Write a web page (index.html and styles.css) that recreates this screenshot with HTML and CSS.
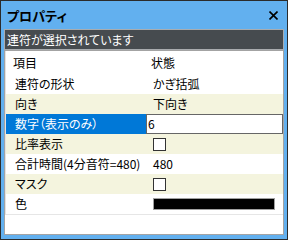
FILE: index.html
```html
<!DOCTYPE html>
<html lang="ja">
<head>
    <meta charset="UTF-8">
    <title>プロパティ</title>
    <link rel="stylesheet" href="styles.css">
</head>
<body>
    <div class="window">
        <div class="titlebar">
            <span class="title">プロパティ</span>
            <svg class="close" width="9" height="9" viewBox="0 0 9 9">
                <path d="M0.5 0.5L8.5 8.5M8.5 0.5L0.5 8.5" stroke="#000" stroke-width="1.6"/>
            </svg>
        </div>
        <div class="status">連符が選択されています</div>
        <div class="grid">
            <div class="rows">
                <div class="row head">
                    <div class="label">項目</div>
                    <div class="value">状態</div>
                </div>
                <div class="row">
                    <div class="label">連符の形状</div>
                    <div class="value">かぎ括弧</div>
                </div>
                <div class="row alt">
                    <div class="label">向き</div>
                    <div class="value">下向き</div>
                </div>
                <div class="row selected">
                    <div class="label">数字（表示のみ）</div>
                    <div class="value edit">6</div>
                </div>
                <div class="row alt">
                    <div class="label">比率表示</div>
                    <div class="value"><span class="check"></span></div>
                </div>
                <div class="row">
                    <div class="label">合計時間(4分音符=480)</div>
                    <div class="value">480</div>
                </div>
                <div class="row alt">
                    <div class="label">マスク</div>
                    <div class="value"><span class="check"></span></div>
                </div>
                <div class="row last">
                    <div class="label">色</div>
                    <div class="value"><span class="swatch"></span></div>
                </div>
            </div>
        </div>
    </div>
</body>
</html>
```

FILE: styles.css
```css
body {
    margin: 0;
    font-family: "Noto Sans CJK JP", "Noto Sans", sans-serif;
    font-size: 12px;
    font-feature-settings: "palt";
    color: #000;
}

.window {
    width: 288px;
    height: 240px;
    box-sizing: border-box;
    border: 1px solid #2b2b2b;
    background-color: #62b0ef;
    padding: 0 3px 4px 3px;
    display: flex;
    flex-direction: column;
}

.titlebar {
    height: 27px;
    display: flex;
    align-items: center;
    justify-content: space-between;
    padding: 1px 6px 0 3px;
}

.title {
    font-size: 13px;
    font-weight: bold;
}

.status {
    height: 19px;
    line-height: 19px;
    border: 1px solid #a9acaf;
    background-color: #464b4f;
    color: #fff;
    padding-left: 2px;
}

.grid {
    flex: 1;
    background-color: #fff;
    border: 1px solid #a3a3a3;
}

.rows {
    border-left: 1px solid #e2e2e2;
}

.row {
    display: grid;
    grid-template-columns: 140px 1fr;
    height: 20px;
    line-height: 20px;
}

.row.head {
    height: 23px;
    line-height: 23px;
}

.row.alt {
    background-color: #f4f4de;
}

.row.last {
    border-bottom: 1px solid #e6e6e6;
}

.label {
    padding-left: 9px;
    white-space: nowrap;
}

.head .label {
    padding-left: 7px;
}

.value {
    padding-left: 7px;
    display: flex;
    align-items: center;
}

.head .value {
    padding-left: 5px;
}

.selected .label {
    background-color: #0078d7;
    color: #fff;
}

.value.edit {
    background-color: #fff;
    border: 1px solid #666;
    padding-left: 1px;
    line-height: 18px;
}

.check {
    width: 11px;
    height: 11px;
    border: 1px solid #333;
    background-color: #fff;
}

.swatch {
    width: 120px;
    height: 10px;
    border: 1px solid #a0a0a0;
    background-color: #000;
}
```
